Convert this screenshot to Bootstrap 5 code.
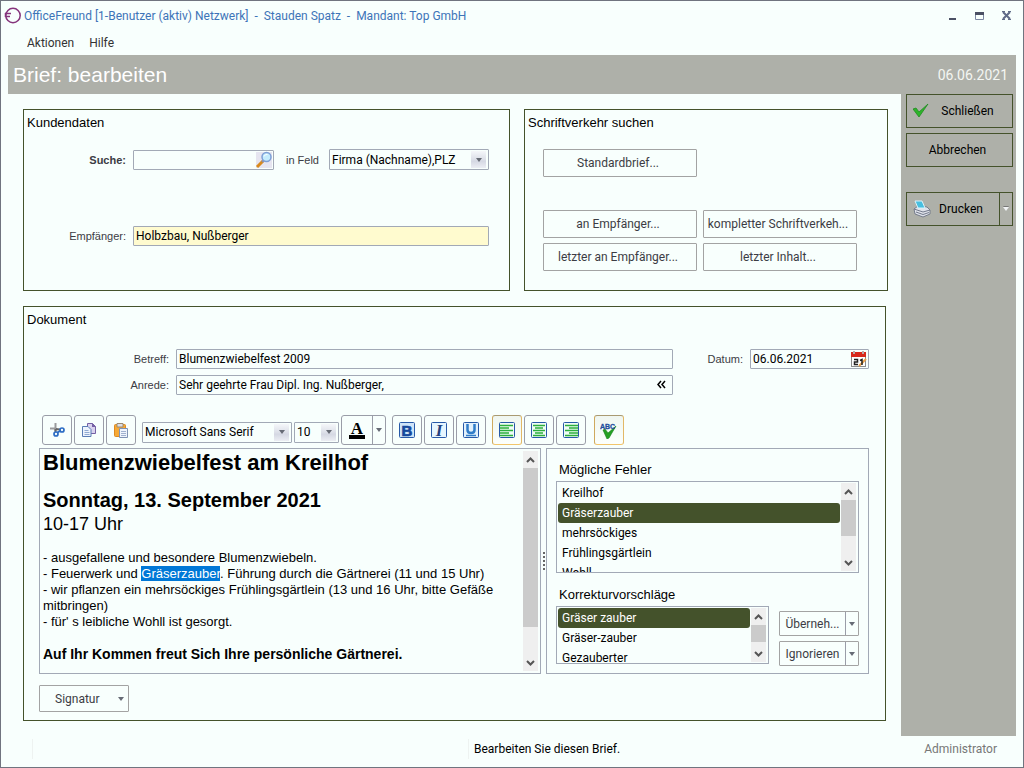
<!DOCTYPE html>
<html lang="de">
<head>
<meta charset="utf-8">
<meta name="viewport" content="width=device-width, initial-scale=1">
<title>OfficeFreund – Brief: bearbeiten</title>
<link href="https://cdn.jsdelivr.net/npm/bootstrap@5.3.0/dist/css/bootstrap.min.css" rel="stylesheet">
<style>
:root{--bg:#f8fffd;--olive:#44522b;--stone:#aeb0a9;--line:#a2a9b6;--ink:#3c3c44}
body{background:var(--bg);font:12px/16px Roboto,"Noto Sans",sans-serif;color:#000}
.window{min-height:100vh;border:1px solid #70747f;padding:0 7px}
.arial{font-family:"Liberation Sans",Arial,sans-serif}
.titlebar{height:29px;color:#3d74b8;margin:0 -4px 0 -4px}
.caption-text{white-space:pre;padding-left:3px}
.win-btn{width:27px;height:22px;padding:0;border:0;background:none;line-height:0}
.menubar{height:25px;padding-left:19px}
.menubar a{color:#333;text-decoration:none;margin-right:15px}
.page-head{background:var(--stone);height:39px;color:#fff;padding:0 8px 0 5px}
.page-head h1{font-size:21px;line-height:24px;margin:0}
.page-head time{font-size:14px;color:#f4f6f2}
.workspace{padding:15px 13px 15px 15px}
.panels{display:grid;grid-template-columns:487fr 364fr;gap:15px 14px}
.group-box{border:1px solid var(--olive);padding:0 20px 19px 3px;min-width:0}
.group-box h2,.side-title{font-size:13px;line-height:16px;margin:0}
.group-box h2{padding-top:5px}
.doc-box{grid-column:1/-1;margin-right:2px;padding:0 16px 8px 3px}
.cap{font:11px/16px "Liberation Sans",Arial,sans-serif;color:var(--ink);text-align:right;padding-right:7px}
.field-box{border:1px solid var(--line);border-radius:1px;height:20px;display:flex;align-items:center;min-width:0;background:var(--bg)}
.field-box input,.field-box select{appearance:none;border:0;background:none;flex:1 1 0;min-width:0;height:18px;padding:0 2px;font:inherit;color:#000;outline:0}
.field-box.tall{height:21px}
.field-box.recipient{grid-column:2/-1;background:#fffbcf}
.field-btn{border:0;background:none;padding:0;line-height:0}
.drop{width:15px;height:17px;margin-right:2px;background:linear-gradient(#f5f7fa,#dcdfe8 50%,#d5d8e3 60%,#eceef4);display:flex;align-items:center;justify-content:center;pointer-events:none}
.tri{display:block;width:0;height:0;border:3px solid transparent;border-top:4px solid #666b75;border-bottom:0}
.customer{display:grid;grid-template-columns:106px 141px 55px minmax(0,1fr);row-gap:56px;margin-top:18px}
.search-grid{display:grid;grid-template-columns:1fr 1fr;gap:5px 6px;padding:0 10px 0 15px;margin-top:18px}
.cmd{background:var(--bg);border:1px solid #a3a3a3;border-radius:1px;height:28px;padding:0 6px 0 2px;color:var(--ink);font:inherit;overflow:hidden;text-overflow:ellipsis;white-space:nowrap}
.cmd.signature{width:90px;height:27px;margin:11px 0 0 12px;padding:0 4px 0 15px}
.search-grid .first{grid-column:1;margin-bottom:28px}
.search-grid .second{grid-column:1}
.doc-fields{display:grid;grid-template-columns:149px minmax(0,497fr) 77px 119px;row-gap:6px;margin-top:21px}
.tools{margin:20px 0 3px 15px;gap:2px}
.tool{width:30px;height:30px;padding:0;border:1px solid #9a9da8;border-radius:3px;background:var(--bg);display:flex;align-items:center;justify-content:center}
.tool.on{border-color:#a99a72 #e2b866 #f2c56b #cfa95e;background:linear-gradient(#eff6f0,#fcfffc)}
.tool svg,.field-btn svg,.action svg{display:block}
.split{border:1px solid #9a9da8;border-radius:3px;display:flex;overflow:hidden}
.split button{border:0;background:none;padding:0;display:flex;align-items:center;justify-content:center;font:inherit;color:var(--ink);white-space:nowrap}
.split button+button{border-left:1px solid #9a9da8;width:13px}
.split.sq{border-radius:1px;height:25px;border-color:#a3a3a3}
.editor-row{display:grid;grid-template-columns:minmax(0,502fr) 5px minmax(0,323fr);margin-left:12px}
.frame{border:1px solid var(--line);min-width:0}
.editor{flex:1 1 0;min-width:0;padding:1px 3px;font:13px/16px "Liberation Sans",Arial,sans-serif;outline:0}
.editor p,.editor h3,.editor h4{margin:0}
.editor h3{font-size:22px;line-height:26px;font-weight:700}
.editor h4{font-size:20px;line-height:24px;font-weight:700;margin-top:12px}
.editor .hours{font-size:18px;line-height:24px}
.editor .gap-above{margin-top:14px}
.editor .closing{font-size:14px;font-weight:700;margin-top:16px}
.editor mark{background:#0078d7;color:#fff;padding:0}
.sbar{width:15px;background:#efefef;display:flex;flex-direction:column;align-items:center;margin:2px;flex:none}
.sbar svg{flex:none;margin:6px 0 5px}
.thumb{width:15px;background:#cbcbcb}
.grip{display:flex;flex-direction:column;gap:2px;align-items:center;justify-content:center}
.grip i{width:2px;height:2px;background:#666}
.checks{padding:13px 9px 7px}
.side-title{padding-left:3px;margin-bottom:3px}
.pick{border:1px solid var(--line);display:flex;overflow:hidden}
.pick .list-group{flex:1 1 0;min-width:0;padding:1px 0 0 1px;overflow:hidden;border-radius:0}
.pick .list-group-item{border:0;height:20px;flex:none;padding:0 4px;background:none;color:#000;line-height:20px;font-size:12px}
.pick .list-group-item.active{background:var(--olive);color:#fff;border-radius:3px;margin:0}
.pick .sbar{margin:1px 2px 1px 1px}
.errors{height:92px;margin-bottom:14px}
.fixes{height:58px}
.fix-row{display:grid;grid-template-columns:minmax(0,213fr) 80px;gap:10px}
.sidebar{width:115px;background:var(--stone);padding:0 3px 0 5px;flex:none}
.action{width:100%;height:34px;border:1px solid var(--olive);background:none;padding:0 6px;display:grid;grid-template-columns:16px 1fr;align-items:center;font:inherit;color:#000}
.action.plain{display:block;margin-top:5px;padding:0 10px 0 6px}
.print{border:1px solid var(--olive);display:flex;margin-top:25px}
.print .action{border:0;height:32px}
.print .more{border:0;border-left:1px solid var(--olive);background:none;width:13px;padding:0 3px;flex:none}
.print .tri{border-top-color:#f2f4f6;filter:drop-shadow(0 -1px 0 #777)}
.statusbar{height:31px;padding:0 19px 5px 24px;display:grid;grid-template-columns:436px 1fr auto;align-items:center}
.statusbar>*{border-left:1px solid #eef3f1;padding-left:5px;height:20px;line-height:20px}
.statusbar>:last-child{border:0;color:#777}
</style>
</head>
<body>
<div class="window d-flex flex-column">
  <header>
    <div class="titlebar d-flex align-items-center">
      <svg width="17" height="17" viewBox="0 0 17 17" fill="none" stroke="#85347c" stroke-width="1.5"><circle cx="9" cy="8.500" r="7.200"/><path d="M1 6.500h6M1 9.500h5M1.500 6v4"/></svg>
      <span class="caption-text">OfficeFreund [1-Benutzer (aktiv) Netzwerk]  -  Stauden Spatz  -  Mandant: Top GmbH</span>
      <div class="ms-auto d-flex">
        <button class="win-btn" aria-label="Minimieren"><svg width="11" height="11"><path d="M2 9h7" stroke="#4b5064" stroke-width="2"/></svg></button>
        <button class="win-btn" aria-label="Maximieren"><svg width="11" height="11"><path d="M1.500 3v6.500h8V3" fill="none" stroke="#7c87a3"/><path d="M1 3.500h9" stroke="#4b5064" stroke-width="3"/></svg></button>
        <button class="win-btn" aria-label="Fenster schließen"><svg width="11" height="11"><path d="M2 2l7 7M9 2l-7 7" stroke="#5f6a87" stroke-width="2"/><path d="M1 1.500h3M7 1.500h3M1 9.500h3M7 9.500h3" stroke="#5f6a87"/></svg></button>
      </div>
    </div>
    <nav class="menubar d-flex align-items-center"><a href="#">Aktionen</a><a href="#">Hilfe</a></nav>
    <div class="page-head d-flex align-items-center justify-content-between">
      <h1 class="arial fw-normal">Brief: bearbeiten</h1><time datetime="2021-06-06">06.06.2021</time>
    </div>
  </header>

  <div class="d-flex flex-grow-1">
    <main class="workspace flex-grow-1">
      <div class="panels">
        <section class="group-box">
          <h2 class="arial fw-normal">Kundendaten</h2>
          <div class="customer align-items-center">
            <label class="cap fw-bold" for="q">Suche:</label>
            <div class="field-box"><input id="q" type="text">
              <button class="field-btn" aria-label="Suchen"><svg width="18" height="18" viewBox="0 0 18 18"><rect x="1" y="1" width="16" height="16" fill="#e6e5f0"/><path d="M2 16l6-6" stroke="#d98a1c" stroke-width="3"/><path d="M7 11l2-2" stroke="#8a8fa8" stroke-width="2"/><circle cx="11.500" cy="6" r="4.500" fill="#c4ecfd" stroke="#7d9fd6" stroke-width="1.500"/><path d="M9 5.500q1-2.500 3.500-2" fill="none" stroke="#fff"/></svg></button></div>
            <label class="cap" for="feld" style="padding-right:10px">in Feld</label>
            <div class="field-box tall"><select id="feld"><option>Firma (Nachname),PLZ</option></select><span class="drop"><i class="tri"></i></span></div>
            <label class="cap" for="empf">Empfänger:</label>
            <div class="field-box recipient"><input id="empf" type="text" value="Holbzbau, Nußberger"></div>
          </div>
        </section>

        <section class="group-box">
          <h2 class="arial fw-normal">Schriftverkehr suchen</h2>
          <div class="search-grid">
            <button class="cmd first">Standardbrief...</button>
            <button class="cmd second">an Empfänger...</button>
            <button class="cmd">kompletter Schriftverkeh...</button>
            <button class="cmd">letzter an Empfänger...</button>
            <button class="cmd">letzter Inhalt...</button>
          </div>
        </section>

        <section class="group-box doc-box">
          <h2 class="arial fw-normal">Dokument</h2>
          <div class="doc-fields align-items-center">
            <label class="cap" for="betreff">Betreff:</label>
            <div class="field-box"><input id="betreff" type="text" value="Blumenzwiebelfest 2009"></div>
            <label class="cap" for="datum">Datum:</label>
            <div class="field-box"><input id="datum" type="text" value="06.06.2021">
              <button class="field-btn" aria-label="Kalender"><svg width="18" height="18" viewBox="0 0 18 18"><rect x="1.500" y="2.500" width="14" height="14" fill="#fff" stroke="#8b8b8b"/><path d="M1 2h15v5H1z" fill="#d8281c"/><path d="M4 1v3M13 1v3" stroke="#b9a9a9" stroke-width="2"/><path d="M9 16l7-7" stroke="#e9a04a" stroke-width="2"/><path d="M4 9.500h3.500v2.500H4.500v2.500H8M10 10.500l2-1v5.500" fill="none" stroke="#222" stroke-width="1.500"/></svg></button></div>
            <label class="cap" for="anrede">Anrede:</label>
            <div class="field-box"><input id="anrede" type="text" value="Sehr geehrte Frau Dipl. Ing. Nußberger,">
              <button class="field-btn" aria-label="Anrede einfügen"><svg width="20" height="16" viewBox="0 0 20 16" fill="none" stroke="#000" stroke-width="1.500"><path d="M9 4L6 7.500 9 11M13 4l-3 3.500 3 3.500"/></svg></button></div>
          </div>

          <div class="tools d-flex align-items-center" role="toolbar" aria-label="Formatierung">
            <button class="tool" aria-label="Ausschneiden"><svg width="16" height="16" viewBox="0 0 16 16" fill="none"><path d="M6.500 1v8M1 6.500h6" stroke="#9a9b9d" stroke-width="2"/><path d="M6.500 7v3M7 7l4 .5" stroke="#666" stroke-width="2"/><circle cx="7" cy="12" r="2" stroke="#2c6cc4" stroke-width="1.700"/><circle cx="13" cy="8" r="2" stroke="#2c6cc4" stroke-width="1.700"/><path d="M8.500 10.500L11 9" stroke="#2c6cc4" stroke-width="2"/></svg></button>
            <button class="tool" aria-label="Kopieren"><svg width="16" height="16" viewBox="0 0 16 16"><path d="M6.500 1.500h5l3 3v7h-8z" fill="#d9d2ee" stroke="#7561a5"/><path d="M11 1v4h4" fill="#7561a5"/><path d="M1.500 4.500h5.500l3 3v7H1.500z" fill="#edf4fd" stroke="#5b7db5"/><path d="M3.500 8.500h4M3.500 10.500h5M3.500 12.500h5" stroke="#91abd2"/></svg></button>
            <button class="tool" aria-label="Einfügen"><svg width="16" height="16" viewBox="0 0 16 16"><rect x="1.500" y="2.500" width="11" height="12" rx="1" fill="#f6a935" stroke="#dd8a20"/><path d="M4 1.500h6V5H4z" fill="#dcdde3" stroke="#9b8a70"/><path d="M6.500 6.500h8v9h-8z" fill="#eef4fc" stroke="#7f93b4"/><path d="M8 9.500h5M8 11.500h5M8 13.500h5" stroke="#9fb1cf"/></svg></button>
            <div class="field-box tall mt-1" style="width:150px;margin-left:4px"><select aria-label="Schriftart"><option>Microsoft Sans Serif</option></select><span class="drop"><i class="tri"></i></span></div>
            <div class="field-box tall mt-1" style="width:45px"><select aria-label="Schriftgröße"><option>10</option></select><span class="drop"><i class="tri"></i></span></div>
            <div class="split me-1" style="width:45px;height:30px">
              <button class="flex-grow-1" aria-label="Schriftfarbe"><svg width="18" height="20" viewBox="0 0 18 20"><text x="9" y="14" text-anchor="middle" font-family="Liberation Serif,serif" font-weight="700" font-size="17">A</text><path d="M1 15h16v4H1z"/></svg></button>
              <button aria-label="Schriftfarbe wählen"><i class="tri"></i></button>
            </div>
            <button class="tool" aria-label="Fett"><svg width="18" height="18" viewBox="0 0 18 18"><rect x="1.500" y="1.500" width="15" height="15" rx="1" fill="#cfe4f8" stroke="#2759a8"/><text x="9" y="14.500" text-anchor="middle" font-family="Liberation Sans,sans-serif" font-weight="700" font-size="15" fill="#15489c" stroke="#15489c" stroke-width=".7">B</text></svg></button>
            <button class="tool" aria-label="Kursiv"><svg width="18" height="18" viewBox="0 0 18 18"><rect x="1.500" y="1.500" width="15" height="15" rx="1" fill="#e6f6ff" stroke="#2759a8"/><text x="9" y="14.500" text-anchor="middle" font-family="Liberation Serif,serif" font-weight="700" font-style="italic" font-size="17" fill="#23407d">I</text></svg></button>
            <button class="tool" aria-label="Unterstrichen"><svg width="18" height="18" viewBox="0 0 18 18"><rect x="1.500" y="1.500" width="15" height="15" rx="1" fill="#e2f1fc" stroke="#2759a8"/><path d="M5.500 3v6q0 3 3.500 3t3.500-3V3" fill="none" stroke="#2f7cc8" stroke-width="2.500"/><path d="M4 14.500h10" stroke="#2f7cc8" stroke-width="1.500"/></svg></button>
            <button class="tool on ms-1" aria-label="Linksbündig"><svg width="18" height="18" viewBox="0 0 18 18"><rect x="1.500" y="1.500" width="15" height="15" rx="1" fill="#effcf6" stroke="#2759a8"/><path d="M2 4.500h13M2 7h9M2 9.500h13M2 12h9M2 14.500h13" stroke="#2cae3d" stroke-width="1.500"/></svg></button>
            <button class="tool" aria-label="Zentriert"><svg width="18" height="18" viewBox="0 0 18 18"><rect x="1.500" y="1.500" width="15" height="15" rx="1" fill="#effcf6" stroke="#2759a8"/><path d="M3 4.500h12M5 7h8M3 9.500h12M5 12h8M3 14.500h12" stroke="#2cae3d" stroke-width="1.500"/></svg></button>
            <button class="tool" aria-label="Rechtsbündig"><svg width="18" height="18" viewBox="0 0 18 18"><rect x="1.500" y="1.500" width="15" height="15" rx="1" fill="#effcf6" stroke="#2759a8"/><path d="M3 4.500h13M7 7h9M3 9.500h13M7 12h9M3 14.500h13" stroke="#2cae3d" stroke-width="1.500"/></svg></button>
            <button class="tool on" style="margin-left:6px" aria-label="Rechtschreibprüfung"><svg width="18" height="18" viewBox="0 0 18 18"><path d="M3 9l2-1 3 4 8-7-7 12-2 1z" fill="#25a022" stroke="#16801a" stroke-width=".6"/><text x="7.500" y="7.500" text-anchor="middle" font-family="Liberation Sans,sans-serif" font-weight="700" font-size="7" fill="#1f4f9c" stroke="#1f4f9c" stroke-width=".3">ABC</text></svg></button>
          </div>

          <div class="editor-row">
            <div class="frame d-flex">
              <div class="editor" contenteditable="true" role="textbox" aria-multiline="true" aria-label="Brieftext" spellcheck="false">
                <h3>Blumenzwiebelfest am Kreilhof</h3>
                <h4>Sonntag, 13. September 2021</h4>
                <p class="hours">10-17 Uhr</p>
                <p class="gap-above">- ausgefallene und besondere Blumenzwiebeln.</p>
                <p>- Feuerwerk und <mark>Gräserzauber</mark>. Führung durch die Gärtnerei (11 und 15 Uhr)</p>
                <p>- wir pflanzen ein mehrsöckiges Frühlingsgärtlein (13 und 16 Uhr, bitte Gefäße mitbringen)</p>
                <p>- für' s leibliche Wohll ist gesorgt.</p>
                <p class="closing">Auf Ihr Kommen freut Sich Ihre persönliche Gärtnerei.</p>
              </div>
              <div class="sbar"><svg width="9" height="6" fill="none" stroke="#555" stroke-width="2"><path d="M1 5l3.500-3.500L8 5"/></svg><div class="thumb" style="flex:161 0 0"></div><div style="flex:27 0 0"></div><svg width="9" height="6" fill="none" stroke="#555" stroke-width="2"><path d="M1 1l3.500 3.500L8 1"/></svg></div>
            </div>
            <div class="grip"><i></i><i></i><i></i><i></i><i></i></div>
            <div class="frame checks">
              <h3 class="side-title arial fw-normal">Mögliche Fehler</h3>
              <div class="pick errors">
                <div class="list-group">
                  <button class="list-group-item list-group-item-action">Kreilhof</button>
                  <button class="list-group-item list-group-item-action active">Gräserzauber</button>
                  <button class="list-group-item list-group-item-action">mehrsöckiges</button>
                  <button class="list-group-item list-group-item-action">Frühlingsgärtlein</button>
                  <button class="list-group-item list-group-item-action">Wohll</button>
                </div>
                <div class="sbar"><svg width="9" height="6" fill="none" stroke="#555" stroke-width="2"><path d="M1 5l3.500-3.500L8 5"/></svg><div class="thumb" style="flex:36 0 0"></div><div style="flex:18 0 0"></div><svg width="9" height="6" fill="none" stroke="#555" stroke-width="2"><path d="M1 1l3.500 3.500L8 1"/></svg></div>
              </div>
              <h3 class="side-title arial fw-normal">Korrekturvorschläge</h3>
              <div class="fix-row">
                <div class="pick fixes">
                  <div class="list-group">
                    <button class="list-group-item list-group-item-action active">Gräser zauber</button>
                    <button class="list-group-item list-group-item-action">Gräser-zauber</button>
                    <button class="list-group-item list-group-item-action">Gezauberter</button>
                  </div>
                  <div class="sbar"><svg width="9" height="6" fill="none" stroke="#555" stroke-width="2"><path d="M1 5l3.500-3.500L8 5"/></svg><div class="thumb" style="flex:17 0 0"></div><div style="flex:3 0 0"></div><svg width="9" height="6" fill="none" stroke="#555" stroke-width="2"><path d="M1 1l3.500 3.500L8 1"/></svg></div>
                </div>
                <div class="d-flex flex-column" style="gap:5px;padding-top:5px">
                  <div class="split sq"><button class="flex-grow-1">Überneh...</button><button aria-label="Übernehmen-Optionen"><i class="tri"></i></button></div>
                  <div class="split sq"><button class="flex-grow-1">Ignorieren</button><button aria-label="Ignorieren-Optionen"><i class="tri"></i></button></div>
                </div>
              </div>
            </div>
          </div>
          <button class="cmd signature d-flex align-items-center justify-content-between">Signatur <i class="tri"></i></button>
        </section>
      </div>
    </main>

    <aside class="sidebar">
      <button class="action"><svg width="16" height="16" viewBox="0 0 16 16"><path d="M0 6l3-1 3 4 9-8L6 14z" fill="#2db52a" stroke="#228a22" stroke-width=".8"/></svg><span>Schließen</span></button>
      <button class="action plain">Abbrechen</button>
      <div class="print">
        <button class="action"><svg width="18" height="18" viewBox="0 0 18 18"><path d="M1 9l4-3 9 1 3 3v4l-7 3-8-3z" fill="#dfe2ea" stroke="#757c8b"/><path d="M2 1h7l3 7H5z" fill="#47bfe0" stroke="#d9f2fa"/><path d="M1 9l9 3 7-2M3 12l7 2.500 6-2" fill="none" stroke="#737a8c"/></svg><span>Drucken</span></button>
        <button class="more" aria-label="Druckoptionen"><i class="tri"></i></button>
      </div>
    </aside>
  </div>

  <footer class="statusbar"><span></span><span>Bearbeiten Sie diesen Brief.</span><span>Administrator</span></footer>
</div>
<script src="https://cdn.jsdelivr.net/npm/bootstrap@5.3.0/dist/js/bootstrap.bundle.min.js"></script>
</body>
</html>
